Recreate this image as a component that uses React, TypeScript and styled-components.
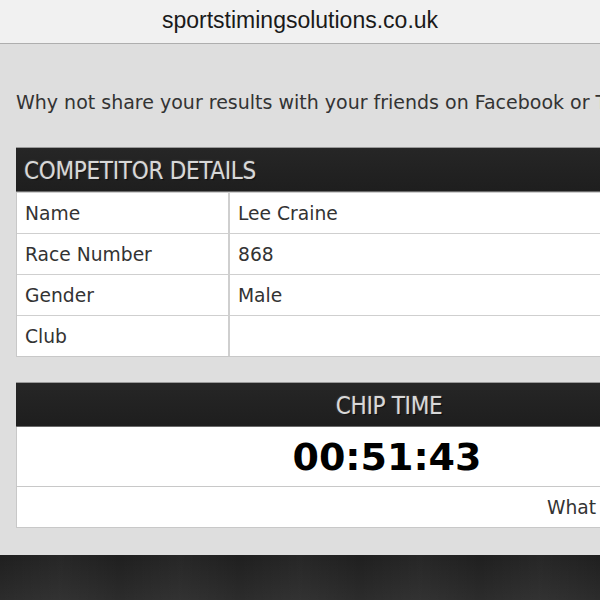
import React from "react";
import styled, { createGlobalStyle } from "styled-components";

const Global = createGlobalStyle`
  html, body { margin: 0; padding: 0; background: #dedede; }
  body { width: 600px; height: 600px; overflow: hidden; }
`;

const Page = styled.div`
  width: 600px;
  height: 600px;
  display: flex;
  flex-direction: column;
  background: #dedede;
  overflow: hidden;
`;

const AddressBar = styled.div`
  height: 44px;
  flex: none;
  background: #f1f1f1;
  border-bottom: 1px solid #aeaeae;
  display: flex;
  align-items: center;
  justify-content: center;
  font-family: "Liberation Sans", Arial, sans-serif;
  font-size: 23px;
  color: #1a1a1a;
  padding-bottom: 3px;
  box-sizing: border-box;
`;

const Content = styled.div`
  flex: 1;
  padding: 0 16px;
  display: flex;
  flex-direction: column;
`;

const Intro = styled.p`
  margin: 46px 0 0;
  font-family: "DejaVu Sans", Verdana, sans-serif;
  font-size: 19px;
  color: #333;
  white-space: nowrap;
  line-height: 24px;
`;

const Panel = styled.div<{ $top: number }>`
  width: 744px;
  flex: none;
  margin-top: ${(p) => p.$top}px;
  background: #fff;
  border: 1px solid #c8c8c8;
  border-top: none;
`;

const PanelHeader = styled.div<{ $center?: boolean }>`
  height: 45px;
  background: linear-gradient(#262626, #1e1e1e);
  border-top: 1px solid #9a9a9a;
  border-bottom: 1px solid #6a6a6a;
  margin: 0 -1px;
  display: flex;
  align-items: center;
  justify-content: ${(p) => (p.$center ? "center" : "flex-start")};
  padding-left: ${(p) => (p.$center ? 0 : 8)}px;
  padding-top: 2px;
  box-sizing: border-box;
  font-family: "DejaVu Sans Condensed", "DejaVu Sans", sans-serif;
  font-stretch: condensed;
  font-size: 24px;
  color: #d8d8d8;
  text-shadow: 0 0 2px rgba(255, 255, 255, 0.35), 1px 1px 1px #000;
  letter-spacing: -0.3px;
`;

const Row = styled.div`
  display: grid;
  grid-template-columns: 213px 1fr;
  height: 40px;
  border-top: 1px solid #cfcfcf;
  &:first-of-type {
    border-top: none;
  }
`;

const Cell = styled.div<{ $divider?: boolean }>`
  display: flex;
  align-items: center;
  padding-left: 8px;
  font-family: "DejaVu Sans", Verdana, sans-serif;
  font-size: 18.7px;
  color: #333;
  border-right: ${(p) => (p.$divider ? "2px solid #cfcfcf" : "none")};
`;

const TimeRow = styled.div`
  height: 59px;
  display: flex;
  align-items: center;
  justify-content: center;
  padding-right: 4px;
  font-family: "DejaVu Sans", Verdana, sans-serif;
  font-weight: bold;
  font-size: 38px;
  color: #000;
  border-bottom: 1px solid #c8c8c8;
`;

const NoteRow = styled.div`
  height: 40px;
  display: flex;
  align-items: center;
  padding-left: 530px;
  font-family: "DejaVu Sans", Verdana, sans-serif;
  font-size: 18.7px;
  color: #333;
  white-space: nowrap;
`;

const Footer = styled.div`
  height: 45px;
  flex: none;
  background:
    repeating-linear-gradient(90deg, rgba(255,255,255,0.0) 0px, rgba(255,255,255,0.03) 60px, rgba(255,255,255,0) 120px),
    linear-gradient(#1f1f1f, #2c2c2c);
`;

const Spacer = styled.div`
  flex: 1;
`;

const details: [string, string][] = [
  ["Name", "Lee Craine"],
  ["Race Number", "868"],
  ["Gender", "Male"],
  ["Club", ""],
];

export default function App() {
  return (
    <Page>
      <Global />
      <AddressBar>sportstimingsolutions.co.uk</AddressBar>
      <Content>
        <Intro>Why not share your results with your friends on Facebook or Twitter</Intro>
        <Panel $top={33}>
          <PanelHeader>COMPETITOR DETAILS</PanelHeader>
          {details.map(([k, v]) => (
            <Row key={k}>
              <Cell $divider>{k}</Cell>
              <Cell>{v}</Cell>
            </Row>
          ))}
        </Panel>
        <Panel $top={25}>
          <PanelHeader $center>CHIP TIME</PanelHeader>
          <TimeRow>00:51:43</TimeRow>
          <NoteRow>What is chip time?</NoteRow>
        </Panel>
      </Content>
      <Spacer />
      <Footer />
    </Page>
  );
}
